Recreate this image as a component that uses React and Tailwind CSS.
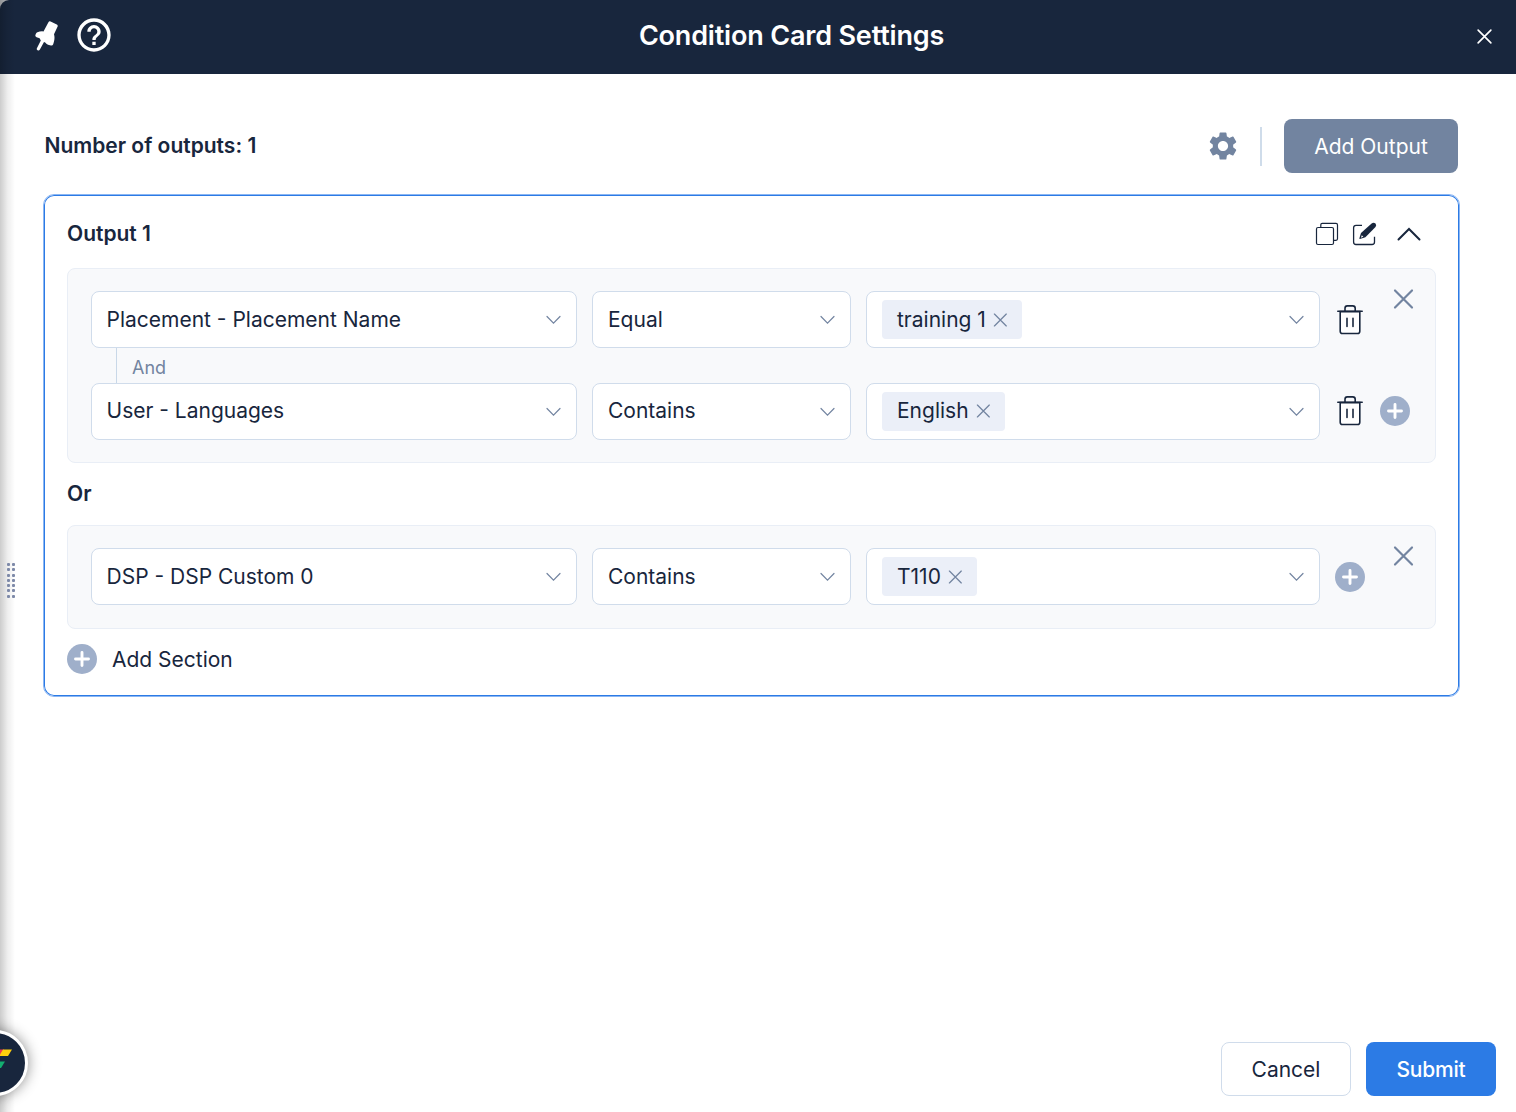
import { MdHelpOutline, MdSettings } from 'react-icons/md';

const sections = [
    {
        rows: [
            { field: 'Placement - Placement Name', operator: 'Equal', value: 'training 1', removable: true },
            { field: 'User - Languages', operator: 'Contains', value: 'English', removable: true, addable: true },
        ],
    },
    {
        rows: [{ field: 'DSP - DSP Custom 0', operator: 'Contains', value: 'T110', addable: true }],
    },
];

function PinIcon() {
    return (
        <svg width="24" height="30" viewBox="0 0 24 30" fill="currentColor">
            <path d="M15.6.5 21.8 3.5Q23.2 4.3 22.5 5.8L19 13.2Q20 16.5 19 20.4L18.2 23.3Q17.5 24.8 16 24.4L13 23.8Q11.2 23.1 10.2 21.6L9 21 4.9 28.5Q4 29.8 2.6 29.2 1.3 28.5 1.9 27.2L5.8 19.4 4.6 17.2 1.6 16.3Q0 15.4.4 14L.9 12.7Q1.4 11.7 2.4 11.3 5.4 10 8.5 10.4L13.3 1.4Q14.2-.1 15.6.5Z" />
        </svg>
    );
}

function CloseIcon({ size, stroke, offset = 0, className }) {
    return (
        <svg width={size} height={size} viewBox="0 0 20 20" className={`overflow-visible ${className}`} fill="none" stroke="currentColor" strokeWidth={stroke} strokeLinecap="round">
            <path transform={`translate(${offset} 0)`} d="M1.5 1.5l17 17M18.5 1.5l-17 17" />
        </svg>
    );
}

function CopyIcon() {
    return (
        <svg width="24" height="24" viewBox="0 0 24 24" fill="none" stroke="currentColor" strokeWidth="1.2">
            <rect x="1.5" y="5.5" width="17" height="17" rx="1.5" />
            <path d="M5.8 5.3V2.8Q5.8 1.4 7.2 1.4H21Q22.5 1.4 22.5 2.9V16.8Q22.5 18.3 21 18.3H18.7" />
        </svg>
    );
}

function EditIcon() {
    return (
        <svg width="26" height="24" viewBox="0 0 26 24" fill="none">
            <path d="M10 3.4H4Q1.6 3.4 1.6 5.8V20Q1.6 22.5 4 22.5H20Q22.5 22.5 22.5 20V14.8" stroke="currentColor" strokeWidth="1.3" />
            <path d="M9 11 19.6 1.4Q21.6 0 23.5 1.5 24.9 3.3 23.5 5.1L13.4 15.2 7.9 17.1Q7.2 17.1 7.4 16.3Z" fill="currentColor" />
            <path d="M9.8 13.2l1.5 1.6-2.4.9z" fill="white" />
        </svg>
    );
}

function TrashIcon() {
    return (
        <svg width="26" height="30" viewBox="0 0 26 30" fill="none" stroke="currentColor" strokeWidth="1.6" strokeLinecap="round">
            <path d="M3.2 6.6H22.8V26.2Q22.8 28.5 20.5 28.5H5.5Q3.2 28.5 3.2 26.2Z" fill="white" />
            <path d="M.8 6.3H25.2M8 6V3.2Q8 .9 10.3.9H15.7Q18.2.9 18.2 3.2V6" />
            <path d="M10 13.3V21.5M16 13.3V21.5" />
        </svg>
    );
}

function PlusCircle({ className = '' }) {
    return (
        <svg width="30" height="30" viewBox="0 0 30 30" className={`shrink-0 ${className}`}>
            <circle cx="15" cy="15" r="15" fill="#9fafca" />
            <path d="M15 8.5v13M8.5 15h13" stroke="white" strokeWidth="2.9" strokeLinecap="round" />
        </svg>
    );
}

function Chevron() {
    return (
        <svg width="16" height="10" viewBox="0 0 16 10" className="ml-auto shrink-0 text-[#7284a0]" fill="none" stroke="currentColor" strokeWidth="1.2" strokeLinecap="round">
            <path d="M2 1.5l6.5 6.7 6.5-6.7" />
        </svg>
    );
}

function Select({ className, children }) {
    return (
        <div className={`flex h-[57px] shrink-0 items-center rounded-lg border border-[#d0dceb] bg-white px-[15px] ${className}`}>
            {children}
            <Chevron />
        </div>
    );
}

function ConditionRow({ row, joined }) {
    // Rows hanging off an "And" connector sit their content slightly higher
    const lift = joined ? 'pb-[2px]' : '';

    return (
        <div className="flex items-center gap-[15px]">
            <Select className="w-[486px]">
                <span className={`-ml-[0.5px] ${lift}`}>{row.field}</span>
            </Select>
            <Select className="w-[259px]">
                <span className={lift}>{row.operator}</span>
            </Select>
            <Select className="w-[454px]">
                <span className={`flex h-[39px] items-center gap-[7px] rounded-[4px] bg-[#ebeff8] px-[15px] ${lift}`}>
                    {row.value}
                    <CloseIcon size={14} stroke={1.8} offset={0.5} className="text-[#7284a0]" />
                </span>
            </Select>
            {row.removable && (
                <div className={`flex w-[30px] shrink-0 justify-center ${lift}`}>
                    <TrashIcon />
                </div>
            )}
            {row.addable && <PlusCircle className={joined ? 'mb-[2px]' : ''} />}
        </div>
    );
}

function Section({ rows }) {
    return (
        <div className={`relative rounded-lg border border-[#e9eef6] bg-[#f8f9fb] pt-[22px] pl-[23px] ${rows.length > 1 ? 'pb-[22px]' : 'pb-[23px]'}`}>
            {rows.map((row, i) => (
                <div key={row.field}>
                    {i > 0 && (
                        <div className="ml-[25px] flex h-[35px] items-center border-l border-[#c9d8e8] pt-1 pl-[15px] text-[18px] text-[#7284a0]">
                            And
                        </div>
                    )}
                    <ConditionRow row={row} joined={i > 0} />
                </div>
            ))}
            <CloseIcon size={20} stroke={2.2} offset={0.5} className="absolute top-[20px] right-[22px] text-[#7284a0]" />
        </div>
    );
}

function DragHandle() {
    return (
        <div className="absolute top-[563px] left-[7px] grid grid-cols-2 gap-x-[2px] gap-y-[2.3px]">
            {Array.from({ length: 14 }, (_, i) => (
                <span key={i} className="size-[3px] rounded-[1px] bg-[#7d89a8]" />
            ))}
        </div>
    );
}

// Half-hidden launcher that peeks in from the left edge
function Launcher() {
    return (
        <div className="absolute top-[1030px] -left-[38px] size-[66px] rounded-full border-[3px] border-white bg-[#18263d] shadow-[0_0_14px_rgba(0,0,0,0.45)]">
            <svg width="60" height="60" viewBox="-35 1033 60 60">
                <path d="M-8 1049.5H4L0 1056H-12Z" fill="#f0384f" />
                <path d="M3 1049.5H12L8 1056H-1Z" fill="#ffcf0d" />
                <path d="M-6 1061.5H5L1 1068H-10Z" fill="#13ae70" />
            </svg>
        </div>
    );
}

export default function App() {
    return (
        <div className="relative flex h-[1112px] w-[1516px] flex-col overflow-hidden bg-[#b9bbbf] font-['Inter',sans-serif] text-[21px] leading-none text-[#18263d]">
            <header className="flex h-[74px] shrink-0 items-center rounded-tl-[9px] bg-[#18263d] pr-6 pb-[2px] pl-[35px] text-white">
                <PinIcon />
                <MdHelpOutline size={40} className="-mt-[3px] ml-[15px]" />
                <h1 className="flex-1 pr-[8px] pb-[2px] text-center text-[27px] font-semibold tracking-[-0.18px]">Condition Card Settings</h1>
                <CloseIcon size={15} stroke={2.2} />
            </header>

            <main className="flex flex-1 flex-col bg-white pr-14 pl-[43px]">
                <div className="mt-[45px] flex h-[54px] items-center pl-[1.5px]">
                    <h2 className="flex-1 pb-[2px] font-semibold">Number of outputs: 1</h2>
                    <MdSettings size={34} className="text-[#7284a0]" />
                    <div className="ml-5 h-[39px] w-[2px] bg-[#cfdcea]" />
                    <button className="mr-[2px] ml-[22px] h-[54px] w-[174px] rounded-lg bg-[#7284a0] text-white">Add Output</button>
                </div>

                <div className="mt-[21px] rounded-[11px] border border-[#8bb6f3] px-[23px] shadow-[inset_0_0_0_1px_#2c7be5]">
                    <div className="flex h-[73px] items-center pt-1">
                        <h3 className="flex-1 font-semibold">Output 1</h3>
                        <div className="flex items-center pr-[14px]">
                            <CopyIcon />
                            <span className="ml-[13px]"><EditIcon /></span>
                            <svg width="26" height="16" viewBox="0 0 26 16" className="ml-[18px]" fill="none" stroke="currentColor" strokeWidth="2" strokeLinecap="round">
                                <path d="M2.5 13.5L13 3l10.5 10.5" />
                            </svg>
                        </div>
                    </div>
                    {sections.map((section, i) => (
                        <div key={i}>
                            {i > 0 && <div className="flex h-[62px] items-center pb-[2px] font-semibold">Or</div>}
                            <Section rows={section.rows} />
                        </div>
                    ))}
                    <div className="flex h-[67px] items-center gap-[15px] pb-[7px]">
                        <PlusCircle />
                        Add Section
                    </div>
                </div>
            </main>

            <footer className="flex h-[70px] shrink-0 justify-end gap-[15px] bg-white pr-5">
                <button className="h-[54px] w-[130px] rounded-lg border border-[#d0dceb]">Cancel</button>
                <button className="h-[54px] w-[130px] rounded-lg bg-[#2c7be5] font-medium tracking-[-0.2px] text-white">Submit</button>
            </footer>

            <div className="pointer-events-none absolute inset-y-0 left-0 w-[15px] bg-linear-to-r from-black/20 via-black/7 to-transparent" />
            <DragHandle />
            <Launcher />
        </div>
    );
}
